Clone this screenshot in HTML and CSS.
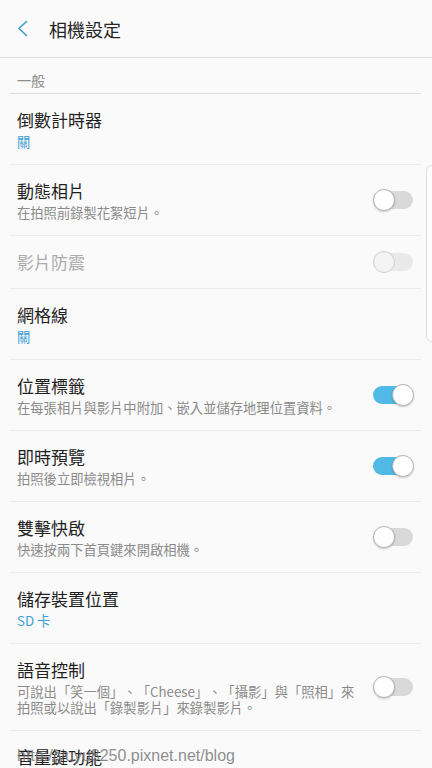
FILE: index.html
```html
<!DOCTYPE html>
<html lang="zh-Hant">
<head>
    <meta charset="UTF-8">
    <meta name="viewport" content="width=device-width, initial-scale=1.0">
    <link rel="stylesheet" href="styles.css">
    <title>相機設定</title>
</head>
<body>

    <header class="top-bar">
        <svg class="back" width="14" height="20" viewBox="0 0 14 20">
            <polyline points="11,2 3,9.5 11,17" fill="none" stroke="#3d9fd3" stroke-width="1.6"/>
        </svg>
        <h1 class="title">相機設定</h1>
    </header>

    <main class="list">
        <div class="section">一般</div>

        <div class="row">
            <div class="text">
                <div class="name">倒數計時器</div>
                <div class="value">關</div>
            </div>
        </div>

        <div class="row">
            <div class="text">
                <div class="name">動態相片</div>
                <div class="desc">在拍照前錄製花絮短片。</div>
            </div>
            <span class="switch"></span>
        </div>

        <div class="row disabled">
            <div class="text">
                <div class="name">影片防震</div>
            </div>
            <span class="switch"></span>
        </div>

        <div class="row">
            <div class="text">
                <div class="name">網格線</div>
                <div class="value">關</div>
            </div>
        </div>

        <div class="row">
            <div class="text">
                <div class="name">位置標籤</div>
                <div class="desc">在每張相片與影片中附加、嵌入並儲存地理位置資料。</div>
            </div>
            <span class="switch on"></span>
        </div>

        <div class="row">
            <div class="text">
                <div class="name">即時預覽</div>
                <div class="desc">拍照後立即檢視相片。</div>
            </div>
            <span class="switch on"></span>
        </div>

        <div class="row">
            <div class="text">
                <div class="name">雙擊快啟</div>
                <div class="desc">快速按兩下首頁鍵來開啟相機。</div>
            </div>
            <span class="switch"></span>
        </div>

        <div class="row">
            <div class="text">
                <div class="name">儲存裝置位置</div>
                <div class="value">SD 卡</div>
            </div>
        </div>

        <div class="row">
            <div class="text">
                <div class="name">語音控制</div>
                <div class="desc">可說出「笑一個」、「Cheese」、「攝影」與「照相」來拍照或以說出「錄製影片」來錄製影片。</div>
            </div>
            <span class="switch"></span>
        </div>

        <div class="row last">
            <div class="text">
                <div class="name">音量鍵功能</div>
            </div>
        </div>
    </main>

    <div class="edge-handle"></div>
    <div class="watermark">http://yuyu8250.pixnet.net/blog</div>

</body>
</html>
```

FILE: styles.css
```css
body {
    margin: 0;
    padding: 0;
    background-color: #fafafa;
    font-family: 'Noto Sans CJK TC', 'Noto Sans', sans-serif;
    color: #222;
    height: 768px;
    overflow: hidden;
    position: relative;
    text-spacing-trim: space-all;
}

.top-bar {
    display: flex;
    align-items: center;
    height: 57px;
    border-bottom: 1.5px solid #d9d9d9;
    padding-left: 16px;
}

.back {
    display: block;
    margin-right: 19px;
    margin-top: 1px;
}

.title {
    margin: 0;
    font-size: 18px;
    font-weight: normal;
    line-height: 24px;
    color: #252525;
}

.list {
    margin: 0 11px 0 10px;
}

.section {
    font-size: 14px;
    line-height: 20px;
    color: #8c8c8c;
    padding: 12px 7px 3px;
    border-bottom: 1.5px solid #dcdcdc;
}

.row {
    display: flex;
    align-items: center;
    padding: 14px 8px 14px 7px;
    border-bottom: 1px solid #ebebeb;
}

.row.last {
    border-bottom: none;
}

.text {
    flex: 1;
}

.name {
    font-size: 17px;
    line-height: 24px;
    color: #1f1f1f;
}

.desc,
.value {
    font-size: 13.3px;
    line-height: 16px;
    margin-top: 2px;
    color: #8a8a8a;
}

.row .desc {
    padding-right: 8px;
}

.value {
    color: #3d9fd3;
}

.disabled .name {
    color: #ababab;
}

.switch {
    position: relative;
    flex: none;
    width: 40px;
    height: 22px;
}

.switch::before {
    content: '';
    position: absolute;
    left: 2px;
    right: 0;
    top: 2px;
    height: 18px;
    border-radius: 9px;
    background-color: #d9d9d9;
}

.switch::after {
    content: '';
    position: absolute;
    left: 0;
    top: 0;
    width: 20px;
    height: 20px;
    border-radius: 50%;
    background-color: #fff;
    border: 1px solid #b5b5b5;
    box-shadow: 0 1px 2px rgba(0, 0, 0, 0.2);
}

.switch.on::before {
    left: 0;
    background-color: #50b9e5;
}

.switch.on::after {
    left: auto;
    right: -1px;
}

.disabled .switch::before {
    background-color: #e9e9e9;
}

.disabled .switch::after {
    background-color: #f3f3f3;
    border-color: #cfcfcf;
    box-shadow: none;
}

.edge-handle {
    position: absolute;
    left: 426px;
    top: 165px;
    width: 20px;
    height: 175px;
    border: 1px solid #dedede;
    border-radius: 6px;
    background-color: #fcfcfc;
}

.watermark {
    position: absolute;
    left: 17px;
    top: 746px;
    font-family: 'Liberation Sans', Arial, sans-serif;
    font-size: 16px;
    line-height: 20px;
    color: rgba(120, 120, 120, 0.85);
}
```
